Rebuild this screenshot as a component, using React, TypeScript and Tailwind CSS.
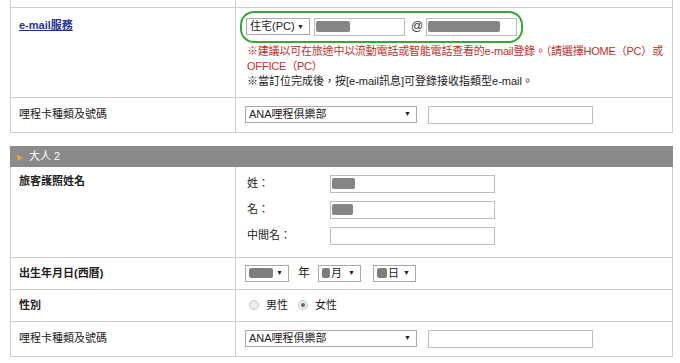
const font = "font-['Arial','Liberation_Sans','Noto_Sans_CJK_TC',sans-serif]";

const Select = ({ label, w, blob }: { label?: string; w: string; blob?: string }) => (
  <div className={`flex h-[17px] ${w} shrink-0 items-center justify-between whitespace-nowrap border border-[#a9a9a9] bg-white pl-[3px] pr-[5px] text-[11px] text-[#222]`}>
    <span className="flex items-center gap-[1px]">
      {blob && <span className={`inline-block h-[10px] ${blob} rounded-[2px] bg-[#7d7d7d]`} />}
      {label}
    </span>
    <span className="text-[7px]">▼</span>
  </div>
);

const Input = ({ w, blob }: { w: string; blob?: string }) => (
  <div className={`flex h-[18px] ${w} shrink-0 items-center border border-[#bdbdbd] bg-white px-[1px]`}>
    {blob && <span className={`inline-block h-[11px] ${blob} rounded-[2px] bg-[#858585]`} />}
  </div>
);

const Label = ({ children, bold, top }: { children: React.ReactNode; bold?: boolean; top?: boolean }) => (
  <td
    className={`w-[225px] border border-[#cfcfcf] px-[8px] text-[11px] text-[#222] ${top ? 'align-top' : 'align-middle'} ${
      bold ? 'font-bold' : ''
    }`}
  >
    {children}
  </td>
);

const MileageRow = () => (
  <tr className="h-[35px]">
    <Label>哩程卡種類及號碼</Label>
    <td className="border border-[#cfcfcf] px-[9px] align-middle">
      <div className="flex items-center gap-[11px]">
        <Select label="ANA哩程俱樂部" w="w-[172px]" />
        <Input w="w-[165px]" />
      </div>
    </td>
  </tr>
);

export default function App() {
  return (
    <div className={`h-[363px] w-[680px] overflow-hidden bg-white ${font}`}>
      <table className="ml-[10px] w-[663px] table-fixed border-collapse">
        <tbody>
          <tr className="h-[7px]">
            <td className="w-[225px] border border-t-0 border-[#cfcfcf]" />
            <td className="border border-t-0 border-[#cfcfcf]" />
          </tr>
          <tr className="h-[90px]">
            <Label top>
              <a className="mt-[9px] block font-bold text-[#1d3596] underline">e-mail服務</a>
            </Label>
            <td className="border border-[#cfcfcf] pl-[4px] pr-[3px] pt-[3px] align-top text-[11px] leading-[15px]">
              <div className="flex h-[32px] w-[283px] items-center rounded-[14px] border-2 border-[#3aa53a] pl-[4px]">
                <Select label="住宅(PC)" w="w-[64px]" />
                <span className="w-[4px]" />
                <Input w="w-[91px]" blob="w-[34px]" />
                <span className="ml-[6px] mr-[3px] text-[12px] text-[#333]">@</span>
                <Input w="w-[91px]" blob="w-[72px]" />
              </div>
              <div className="mt-[1px] whitespace-nowrap pl-[7px] tracking-[-0.2px] text-[#c0302a]">
                ※建議以可在旅途中以流動電話或智能電話查看的e-mail登錄。（請選擇HOME（PC）或
                <br />
                OFFICE（PC）
              </div>
              <div className="pl-[7px] text-[#222]">※當訂位完成後，按[e-mail訊息]可登錄接收指類型e-mail。</div>
            </td>
          </tr>
          <MileageRow />
        </tbody>
      </table>

      <table className="ml-[10px] mt-[13px] w-[663px] table-fixed border-collapse">
        <tbody>
          <tr className="h-[20px]">
            <td className="w-[225px] border border-r-0 border-[#8a8a8a] bg-[#8a8a8a] px-[5px] text-[11px] text-white">
              <span className="mr-[6px] text-[7px] text-[#f0a030]">▶</span>
              大人 2
            </td>
            <td className="border border-l-0 border-[#8a8a8a] bg-[#8a8a8a]" />
          </tr>
          <tr className="h-[91px]">
            <Label bold top>
              <div className="mt-[6px]">旅客護照姓名</div>
            </Label>
            <td className="border border-[#cfcfcf] pl-[11px] align-top text-[11px] text-[#222]">
              <div className="mt-[8px] flex flex-col gap-[8px]">
                {[
                  ['姓：', 'w-[23px]'],
                  ['名：', 'w-[21px]'],
                  ['中間名：', ''],
                ].map(([t, b]) => (
                  <div key={t} className="flex items-center">
                    <span className="w-[83px]">{t}</span>
                    <Input w="w-[165px]" blob={b || undefined} />
                  </div>
                ))}
              </div>
            </td>
          </tr>
          <tr className="h-[32px]">
            <Label bold>出生年月日(西曆)</Label>
            <td className="border border-[#cfcfcf] px-[9px] text-[11px] text-[#222]">
              <div className="flex items-center">
                <Select w="w-[44px]" blob="w-[24px]" />
                <span className="ml-[9px] mr-[8px] text-[12px]">年</span>
                <Select w="w-[43px]" blob="w-[8px]" label="月" />
                <span className="w-[12px]" />
                <Select w="w-[43px]" blob="w-[10px]" label="日" />
              </div>
            </td>
          </tr>
          <tr className="h-[32px]">
            <Label bold>性別</Label>
            <td className="border border-[#cfcfcf] pl-[13px] text-[11px] text-[#222]">
              <div className="flex items-center">
                <span className="h-[10px] w-[10px] rounded-full border border-[#c8c8c8] bg-[#ececec]" />
                <span className="ml-[7px] mr-[10px]">男性</span>
                <span className="flex h-[10px] w-[10px] items-center justify-center rounded-full border border-[#c8c8c8] bg-[#ececec]">
                  <span className="h-[4px] w-[4px] rounded-full bg-[#666]" />
                </span>
                <span className="ml-[7px]">女性</span>
              </div>
            </td>
          </tr>
          <MileageRow />
        </tbody>
      </table>
    </div>
  );
}
